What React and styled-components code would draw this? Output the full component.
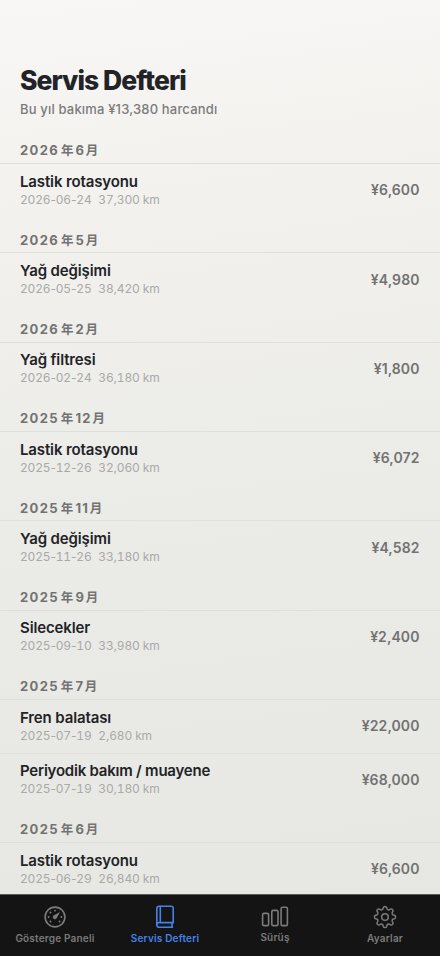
import React from "react";
import styled, { createGlobalStyle } from "styled-components";

const GlobalStyle = createGlobalStyle`
  * { box-sizing: border-box; }
  html, body { margin: 0; padding: 0; }
  body { background: #141414; overflow: hidden; }
`;

const Screen = styled.div`
  width: 440px;
  height: 956px;
  display: flex;
  flex-direction: column;
  overflow: hidden;
  font-family: Inter, "Noto Sans CJK JP", sans-serif;
  background: linear-gradient(173deg, #f8f7f5 0%, #f2f1ee 22%, #ebebe8 52%, #e6e7e3 100%);
`;

const Content = styled.main`
  flex: 1;
  min-height: 0;
  overflow: hidden;
`;

const Header = styled.header`
  padding: 62px 20px 0;
  height: 127.3px;
`;

const Title = styled.h1`
  margin: 0;
  font-size: 26.5px;
  line-height: 36px;
  font-weight: 800;
  letter-spacing: -0.95px;
  color: #222326;
`;

const Summary = styled.p`
  margin: 3px 0 0;
  font-size: 13px;
  line-height: 17px;
  font-weight: 500;
  letter-spacing: 0.17px;
  color: #7b7b7a;
`;

const MonthTitle = styled.h2`
  margin: 0;
  height: 35.7px;
  padding: 14.2px 20px 0;
  font-size: 13px;
  line-height: 18px;
  font-weight: 700;
  letter-spacing: 1.35px;
  color: #737372;
`;

const Unit = styled.span`
  margin-left: ${(p) => (p.$year ? 2 : 0.5)}px;
  margin-right: ${(p) => (p.$year ? 0.7 : 0)}px;
  font-size: 12.5px;
`;

const Row = styled.div`
  height: 53.65px;
  padding: 0 20.5px 0 20px;
  display: flex;
  align-items: center;
  justify-content: space-between;
  border-top: 1px solid #dfdfdc;
`;

const Service = styled.div`
  font-size: 15px;
  line-height: 18px;
  font-weight: 600;
  letter-spacing: ${(p) => (p.$long ? -0.22 : -0.13)}px;
  color: #222326;
`;

const Detail = styled.div`
  display: flex;
  gap: 6.8px;
  font-size: 12px;
  line-height: 17px;
  letter-spacing: -0.18px;
  color: #a9a9a7;
`;

const Digits = styled.span`
  font-variant-numeric: tabular-nums;
`;

const Price = styled.div`
  padding-bottom: 1px;
  font-size: 14px;
  font-weight: 600;
  letter-spacing: 0.08px;
  color: #727271;
`;

const TabBar = styled.nav`
  height: 62px;
  flex: none;
  display: grid;
  grid-template-columns: repeat(4, 1fr);
  background: #141414;
  border-top: 1px solid #5a5a59;
`;

const Tab = styled.div`
  display: flex;
  flex-direction: column;
  align-items: center;
  padding-top: ${(p) => p.$top}px;
  font-size: 10px;
  line-height: 12px;
  font-weight: 600;
  letter-spacing: 0.2px;
  color: ${(p) => (p.$active ? "#4582e8" : "#7b7b7b")};

  svg {
    display: block;
    margin-bottom: 3px;
  }
`;

const months = [
  [2026, 6, [["Lastik rotasyonu", "2026-06-24", "37,300 km", "¥6,600"]]],
  [2026, 5, [["Yağ değişimi", "2026-05-25", "38,420 km", "¥4,980"]]],
  [2026, 2, [["Yağ filtresi", "2026-02-24", "36,180 km", "¥1,800"]]],
  [2025, 12, [["Lastik rotasyonu", "2025-12-26", "32,060 km", "¥6,072"]]],
  [2025, 11, [["Yağ değişimi", "2025-11-26", "33,180 km", "¥4,582"]]],
  [2025, 9, [["Silecekler", "2025-09-10", "33,980 km", "¥2,400"]]],
  [2025, 7, [
    ["Fren balatası", "2025-07-19", "2,680 km", "¥22,000"],
    ["Periyodik bakım / muayene", "2025-07-19", "30,180 km", "¥68,000"],
  ]],
  [2025, 6, [["Lastik rotasyonu", "2025-06-29", "26,840 km", "¥6,600"]]],
];

// Equal-width digits with naturally spaced punctuation.
const Figures = ({ text }) => (
  <span>
    {text.split(/(\d+)/).map((part, i) => (i % 2 ? <Digits key={i}>{part}</Digits> : part))}
  </span>
);

const GaugeIcon = () => {
  const dots = [135, 180, 225, 270, 0, 45].map((a) => (a * Math.PI) / 180);
  return (
    <svg width="24" height="24" viewBox="0 0 24 24" fill="none" stroke="currentColor">
      <circle cx="12" cy="12" r="9.9" strokeWidth="1.6" />
      {dots.map((a) => (
        <circle key={a} cx={12 + 6.4 * Math.cos(a)} cy={12 + 6.4 * Math.sin(a)} r="0.95" fill="currentColor" stroke="none" />
      ))}
      <path d="M17 7 13.8 13a2.1 2.1 0 1 1-2.8-2.8Z" fill="currentColor" stroke="none" />
    </svg>
  );
};

const BookIcon = () => (
  <svg width="24" height="24" viewBox="0 0 24 24" fill="none" stroke="currentColor" strokeWidth="1.6" strokeLinejoin="round" strokeLinecap="round">
    <path d="M20.2 17.6V3.2a1.9 1.9 0 0 0-1.9-1.9H6.2a2.4 2.4 0 0 0-2.4 2.4v16.1a2.5 2.5 0 0 0 2.5 2.5h13.2" />
    <path d="M3.9 19.4a2 2 0 0 1 2.3-1.8h14M7.3 1.5v16M19 17.8v4.3" />
  </svg>
);

const BarsIcon = () => (
  <svg width="28" height="22" viewBox="0 0 28 22" fill="none" stroke="currentColor" strokeWidth="1.6">
    <rect x="1.6" y="7.4" width="6" height="12.2" rx="1.4" />
    <rect x="10.8" y="4.4" width="6.2" height="15.2" rx="1.4" />
    <rect x="20.1" y="1.3" width="6.3" height="18.3" rx="1.4" />
  </svg>
);

const gearPath = (() => {
  const point = (deg, r) => {
    const a = (deg * Math.PI) / 180;
    return `${(12 + r * Math.sin(a)).toFixed(2)} ${(12 - r * Math.cos(a)).toFixed(2)}`;
  };
  let d = `M${point(-14, 8.4)}`;
  for (let i = 0; i < 8; i += 1) {
    const c = i * 45;
    d += `L${point(c - 10, 9.6)}Q${point(c - 7, 10.6)} ${point(c, 10.6)}Q${point(c + 7, 10.6)} ${point(c + 10, 9.6)}L${point(c + 14, 8.4)}Q${point(c + 22.5, 7.3)} ${point(c + 31, 8.4)}`;
  }
  return `${d}Z`;
})();

const GearIcon = () => (
  <svg width="24" height="24" viewBox="0 0 24 24" fill="none" stroke="currentColor" strokeWidth="1.5" strokeLinejoin="round">
    <path d={gearPath} />
    <circle cx="12" cy="12" r="3.3" />
  </svg>
);

export default function App() {
  return (
    <Screen>
      <GlobalStyle />
      <Content>
        <Header>
          <Title>Servis Defteri</Title>
          <Summary>Bu yıl bakıma ¥13,380 harcandı</Summary>
        </Header>
        {months.map(([year, month, rows]) => (
          <section key={`${year}-${month}`}>
            <MonthTitle>
              {year}<Unit $year>年</Unit>{month}<Unit>月</Unit>
            </MonthTitle>
            {rows.map(([name, date, distance, price]) => (
              <Row key={name}>
                <div>
                  <Service $long={name.length > 20}>{name}</Service>
                  <Detail><Figures text={date} /><Figures text={distance} /></Detail>
                </div>
                <Price>{price}</Price>
              </Row>
            ))}
          </section>
        ))}
      </Content>
      <TabBar>
        <Tab $top={10}><GaugeIcon />Gösterge Paneli</Tab>
        <Tab $top={10} $active><BookIcon />Servis Defteri</Tab>
        <Tab $top={11}><BarsIcon />Sürüş</Tab>
        <Tab $top={10}><GearIcon />Ayarlar</Tab>
      </TabBar>
    </Screen>
  );
}
